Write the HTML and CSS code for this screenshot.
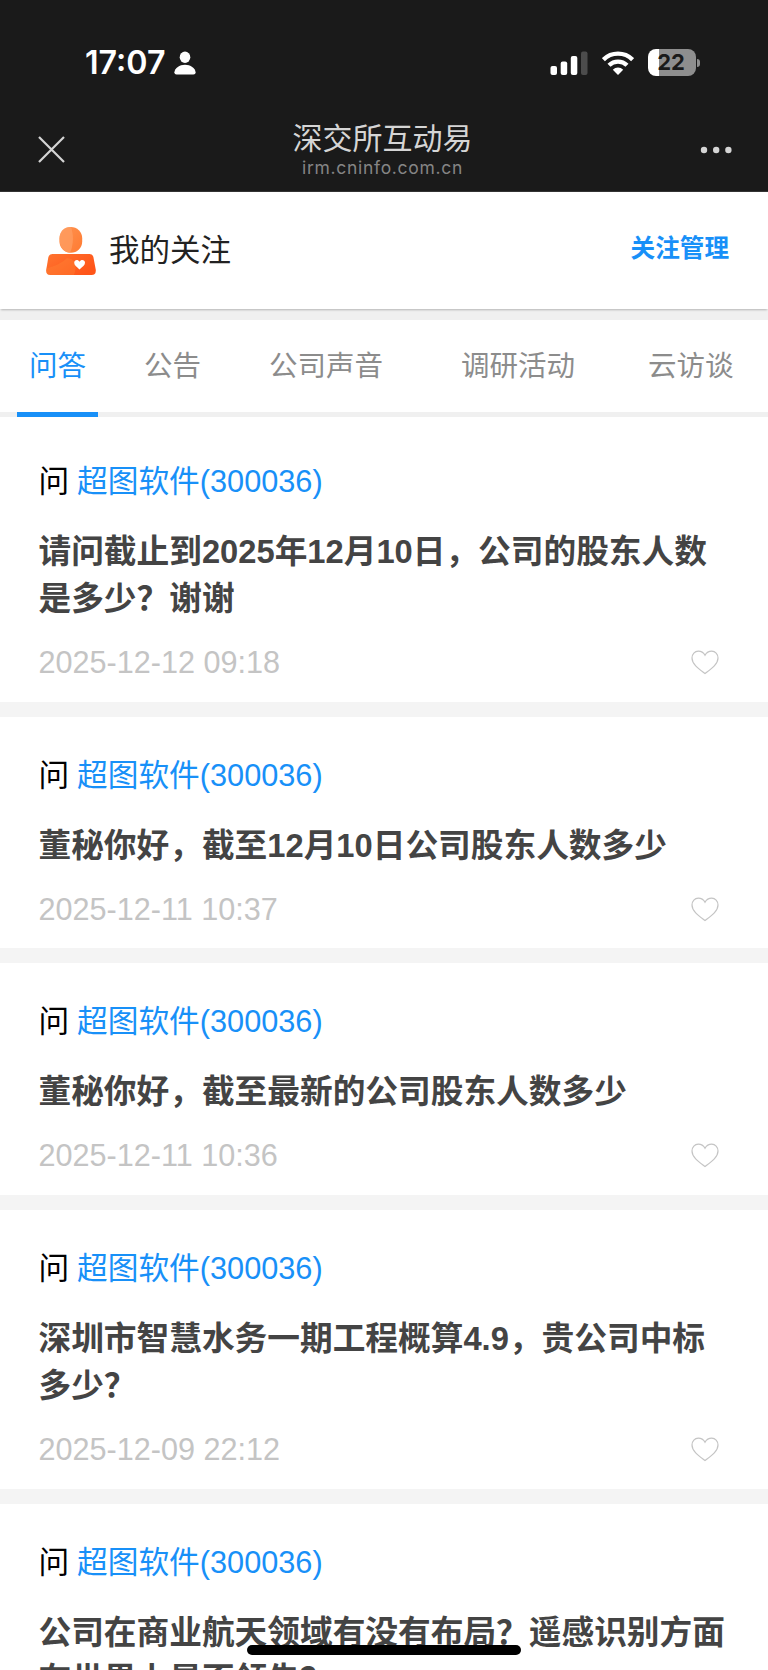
FILE: index.html
```html
<!DOCTYPE html>
<html lang="zh-CN">
<head>
    <meta charset="UTF-8">
    <meta name="viewport" content="width=device-width, initial-scale=1.0">
    <title>深交所互动易</title>
    <link rel="stylesheet" href="styles.css">
</head>
<body>

    <svg class="sprite">
        <symbol id="heart" viewBox="0 0 28 25">
            <path d="M14 23.6C8.5 19.4 1 14.5 1 8C1 4 3.8 1.2 7.3 1.2C10.2 1.2 12.5 2.6 14 5.2C15.5 2.6 17.8 1.2 20.7 1.2C24.2 1.2 27 4 27 8C27 14.5 19.5 19.4 14 23.6Z" fill="none" stroke="#c4c4c4" stroke-width="1.2"/>
        </symbol>
    </svg>

    <header class="top">
        <div class="status-bar">
            <div class="status-left">
                <span class="time">17:07</span>
                <svg class="person" viewBox="0 0 22 24" width="22" height="24" fill="#fff">
                    <ellipse cx="11" cy="6.2" rx="5.3" ry="5.7"/>
                    <path d="M2.6 23.5Q0.3 23.5 0.4 21.3C0.9 17 5.4 13.8 11 13.8S21.1 17 21.6 21.3Q21.7 23.5 19.4 23.5Z"/>
                </svg>
            </div>
            <div class="status-right">
                <svg class="signal" viewBox="0 0 38 24" width="38" height="24" fill="#fff">
                    <rect x="0.5" y="15" width="6.5" height="9" rx="2"/>
                    <rect x="10.7" y="10.5" width="6.5" height="13.5" rx="2"/>
                    <rect x="20.8" y="5" width="6.5" height="19" rx="2"/>
                    <rect x="31" y="0.5" width="6.5" height="23.5" rx="2" fill="#4c4c4c"/>
                </svg>
                <svg class="wifi" viewBox="0 0 32 24" width="32" height="24">
                    <g fill="none" stroke="#fff" stroke-width="4.3">
                        <path d="M1.4 8.6A20.8 20.8 0 0 1 30.6 8.6"/>
                        <path d="M7 14.3A12.8 12.8 0 0 1 25 14.3"/>
                    </g>
                    <path d="M16 24L10.8 18.7A7.4 7.4 0 0 1 21.2 18.7Z" fill="#fff"/>
                </svg>
                <div class="battery"><span>22</span></div>
            </div>
        </div>
        <div class="title-bar">
            <svg class="close" viewBox="0 0 27 27" width="27" height="27">
                <path d="M1 1L26 26M26 1L1 26" stroke="#d5d5d5" stroke-width="2.2"/>
            </svg>
            <div class="page-title">
                <h1>深交所互动易</h1>
                <p>irm.cninfo.com.cn</p>
            </div>
            <svg class="more" viewBox="0 0 32 8" width="32" height="8" fill="#d5d5d5">
                <circle cx="4" cy="4" r="3.2"/>
                <circle cx="16.2" cy="4" r="3.2"/>
                <circle cx="28.4" cy="4" r="3.2"/>
            </svg>
        </div>
    </header>

    <div class="follow">
        <svg class="avatar" viewBox="0 0 50 48" width="50" height="48">
            <defs>
                <linearGradient id="head" x1="0" y1="0" x2="1" y2="1">
                    <stop offset="0" stop-color="#ff9450"/>
                    <stop offset="1" stop-color="#ff7a32"/>
                </linearGradient>
                <linearGradient id="box" x1="0" y1="0" x2="1" y2="0.6">
                    <stop offset="0" stop-color="#ff7430"/>
                    <stop offset="1" stop-color="#ff5519"/>
                </linearGradient>
            </defs>
            <rect x="13.5" y="0" width="22.7" height="25.8" rx="11.3" fill="url(#head)"/>
            <path d="M25 0C16 0 13.5 6 13.5 12.5C13.5 20 18 25.5 24 25.7C28 17 27.5 7 25 0Z" fill="#ff9c60" opacity="0.8"/>
            <path d="M6.5 27H43.5Q46.8 27 47.5 30.5L49.8 43Q50 48 45.5 48H4.5Q-0.2 48 0.2 43L2.3 30.5Q3 27 6.5 27Z" fill="url(#box)"/>
            <path d="M0.2 43L0.5 41.5C9 39 16 36 21 31C32 32 30 42 28 48H4.5Q-0.2 48 0.2 43Z" fill="#ff8a3a" opacity="0.35"/>
            <path d="M33.5 42.5C30.5 39.8 28.2 38.2 28.2 35.8C28.2 32.7 32 32 33.5 34.8C35 32 39 32.7 39 35.8C39 38.2 36.5 39.8 33.5 42.5Z" fill="#fff"/>
        </svg>
        <span class="follow-title">我的关注</span>
        <a class="follow-manage">关注管理</a>
    </div>

    <nav class="tabs">
        <a class="tab active">问答</a>
        <a class="tab">公告</a>
        <a class="tab">公司声音</a>
        <a class="tab">调研活动</a>
        <a class="tab">云访谈</a>
    </nav>

    <main class="list">
        <article class="item">
            <div class="company">问 <a>超图软件(300036)</a></div>
            <h2>请问截止到2025年12月10日，公司的股东人数是多少？谢谢</h2>
            <div class="meta"><time>2025-12-12 09:18</time><svg class="like"><use href="#heart"/></svg></div>
        </article>
        <article class="item">
            <div class="company">问 <a>超图软件(300036)</a></div>
            <h2>董秘你好，截至12月10日公司股东人数多少</h2>
            <div class="meta"><time>2025-12-11 10:37</time><svg class="like"><use href="#heart"/></svg></div>
        </article>
        <article class="item">
            <div class="company">问 <a>超图软件(300036)</a></div>
            <h2>董秘你好，截至最新的公司股东人数多少</h2>
            <div class="meta"><time>2025-12-11 10:36</time><svg class="like"><use href="#heart"/></svg></div>
        </article>
        <article class="item">
            <div class="company">问 <a>超图软件(300036)</a></div>
            <h2>深圳市智慧水务一期工程概算4.9，贵公司中标多少？</h2>
            <div class="meta"><time>2025-12-09 22:12</time><svg class="like"><use href="#heart"/></svg></div>
        </article>
        <article class="item">
            <div class="company">问 <a>超图软件(300036)</a></div>
            <h2>公司在商业航天领域有没有布局？遥感识别方面在世界上是否领先？</h2>
        </article>
    </main>

    <div class="home-bar"></div>

</body>
</html>
```
FILE: styles.css
```css
* {
    box-sizing: border-box;
}
body {
    margin: 0;
    height: 1670px;
    overflow: hidden;
    background: #fff;
    font-family: "Liberation Sans", "Noto Sans CJK SC", sans-serif;
}
h1, h2, p {
    margin: 0;
}
.sprite {
    display: none;
}

/* status bar + title bar */
.top {
    height: 192px;
    background: #1a1a1a;
    border-bottom: 1px solid #333;
}
.status-bar {
    display: flex;
    justify-content: space-between;
    align-items: center;
    height: 108px;
    padding: 17px 68px 0 85px;
}
.status-left, .status-right {
    display: flex;
    align-items: center;
}
.time {
    font-family: Inter, sans-serif;
    font-size: 32.2px;
    font-weight: 600;
    color: #fff;
    width: 89px;
}
.signal {
    margin-right: 14px;
}
.wifi {
    margin-right: 14px;
}
.battery {
    position: relative;
    width: 48px;
    height: 27px;
    margin-right: 4px;
    border-radius: 8px;
    background: linear-gradient(to right, #fff 11px, #8e8e8e 11px);
    color: #1a1a1a;
    font: 700 22px/27px Inter, sans-serif;
    text-align: center;
    padding-right: 2px;
}
.battery::after {
    content: "";
    position: absolute;
    left: 49px;
    top: 10px;
    width: 3px;
    height: 8px;
    border-radius: 0 4px 4px 0;
    background: #8e8e8e;
}
.title-bar {
    display: flex;
    justify-content: space-between;
    align-items: center;
    height: 81px;
    padding: 0 36px 0 38px;
}
.page-title {
    text-align: center;
    color: #d5d5d5;
}
.page-title h1 {
    font-size: 30px;
    font-weight: 400;
    line-height: 38px;
}
.page-title p {
    font: 400 17.5px/20px Inter, sans-serif;
    letter-spacing: 0.7px;
    color: #858585;
}
.close {
    margin-top: 2px;
}
.more {
    margin-top: 3px;
}

/* my follow */
.follow {
    position: relative;
    display: flex;
    align-items: center;
    height: 117px;
    padding: 0 39px 0 46px;
    background: #fff;
    box-shadow: 0 2px 2px -1px rgba(0, 0, 0, 0.25);
}
.follow-title {
    margin: -6px 0 0 13px;
    font-size: 30.5px;
    color: #222;
}
.follow-manage {
    margin: -9px 0 0 auto;
    font-size: 24.6px;
    font-weight: bold;
    color: #1890f8;
}

/* tabs */
.tabs {
    display: flex;
    height: 108px;
    border-top: 11px solid #f0f0f0;
    border-bottom: 5px solid #f0f0f0;
    padding-left: 17px;
}
.tab {
    height: 97px;
    padding: 0 12px;
    line-height: 92px;
    font-size: 28.5px;
    color: #8c8c8c;
    white-space: nowrap;
}
.tab + .tab {
    margin-left: 34px;
}
.tab:nth-child(3) {
    margin-left: 44px;
}
.tab:nth-child(4) {
    margin-left: 54px;
}
.tab:nth-child(5) {
    margin-left: 49px;
}
.tab.active {
    color: #1890f8;
    border-bottom: 5px solid #1890f8;
}

/* questions */
.list {
    padding-top: 6px;
}
.item {
    padding: 35.7px 38px 15.4px 38.5px;
    border-bottom: 15px solid #f4f4f4;
}
.company {
    font-size: 30.7px;
    line-height: 46px;
    color: #000;
}
.company a {
    margin-left: -0.7px;
    color: #1890f8;
}
.item h2 {
    margin-top: 23px;
    font-size: 32.7px;
    line-height: 47.7px;
    color: #444;
}
.meta {
    display: flex;
    justify-content: space-between;
    align-items: center;
    height: 48px;
    margin-top: 15.6px;
    padding-right: 11px;
    font-size: 30.6px;
    color: #c4c4c4;
}
.like {
    width: 28px;
    height: 25px;
}

.home-bar {
    position: fixed;
    left: 247px;
    bottom: 15px;
    width: 274px;
    height: 10px;
    border-radius: 5px;
    background: #000;
}
```
